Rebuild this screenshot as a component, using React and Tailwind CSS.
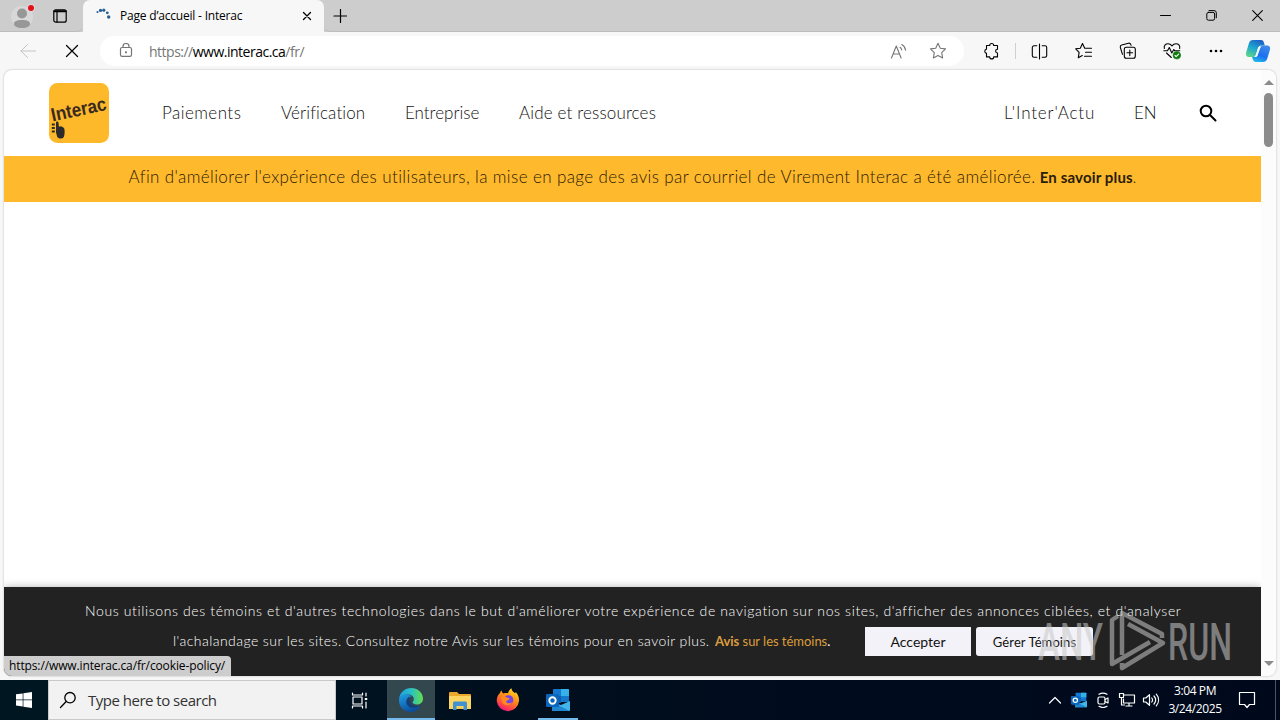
import React from 'react';

const Stroke = ({ size = 18, className = '', sw = 1, children }) => (
  <svg
    width={size}
    height={size}
    viewBox={`0 0 ${size} ${size}`}
    fill="none"
    stroke="currentColor"
    strokeWidth={sw}
    strokeLinecap="round"
    strokeLinejoin="round"
    className={`shrink-0 ${className}`}
  >
    {children}
  </svg>
);

const Slot = ({ className = 'w-11', children }) => (
  <div className={`flex h-full shrink-0 items-center justify-center ${className}`}>{children}</div>
);

const TitleBar = () => (
  <div className="flex h-8 bg-[#cdcdcd] text-black">
    <div className="flex w-[83px] rounded-br-[6px] border-b border-[#bdbdbd]">
      <Slot>
        <svg width="26" height="26" viewBox="0 0 26 26">
          <circle cx="13" cy="14" r="11" fill="#d8d8d8" />
          <circle cx="13" cy="10.5" r="5" fill="#979797" />
          <path d="M5 21c0-3 3-4 8-4s8 1 8 4c0 2-3 4-8 4s-8-2-8-4z" fill="#979797" />
          <circle cx="22" cy="5" r="4" fill="#d8d8d8" />
          <circle cx="22" cy="5" r="3" fill="#e3101c" />
        </svg>
      </Slot>
      <Slot className="w-8">
        <Stroke size={14} sw={1.2}>
          <rect x="0.8" y="0.8" width="12.4" height="12.4" rx="2" />
          <path d="M1.3 2.3h11.4" strokeWidth="2" />
          <path d="M4 3v10" />
        </Stroke>
      </Slot>
    </div>
    <div className="flex w-[241px] items-center rounded-t-[7px] bg-[#f7f7f7]">
      <svg width="16" height="16" viewBox="0 0 16 16" className="ml-3 shrink-0">
        <g fill="#245f96">
          <circle cx="2.5" cy="4" r="1.1" />
          <circle cx="5.5" cy="2.4" r="1.6" />
          <circle cx="8.8" cy="2.2" r="1.6" />
          <circle cx="12.3" cy="4.8" r="1.4" />
          <circle cx="13.7" cy="9" r="1.7" />
        </g>
      </svg>
      <span className="ml-[9px] w-[170px] whitespace-nowrap text-[12px] tracking-[-0.2px]">
        Page d’accueil - Interac
      </span>
      <Stroke size={10} sw={1.3} className="ml-[12px]">
        <path d="M1.5 1.5l7 7M8.5 1.5l-7 7" />
      </Stroke>
    </div>
    <div className="flex flex-1 items-center rounded-bl-[6px] border-b border-[#bdbdbd]">
      <Stroke size={14} sw={1.2} className="ml-[9px]">
        <path d="M7.5 .5v13M1 7h13" />
      </Stroke>
      <div className="ml-auto flex h-full">
        <Slot className="w-[46px]">
          <Stroke size={11}><path d="M.5 5.5h10" /></Stroke>
        </Slot>
        <Slot className="w-[46px]">
          <Stroke size={11}>
            <rect x=".8" y="2.4" width="7.8" height="7.8" rx="1.6" />
            <path d="M3 .6h5a2.2 2.2 0 0 1 2.3 2.2v5" />
          </Stroke>
        </Slot>
        <Slot className="w-[46px]">
          <Stroke size={11} sw={1.1}><path d="M.7.7l9.6 9.6M10.3.7L.7 10.3" /></Stroke>
        </Slot>
      </div>
    </div>
  </div>
);

const Copilot = () => (
  <svg width="26" height="24" viewBox="0 0 26 24">
    <defs>
      <linearGradient id="cpA" x1="0.7" y1="0" x2="0.2" y2="1">
        <stop offset="0" stopColor="#1d62c4" />
        <stop offset=".5" stopColor="#1da8d0" />
        <stop offset="1" stopColor="#5fd58a" />
      </linearGradient>
      <linearGradient id="cpB" x1="0.7" y1="0" x2="0.3" y2="1">
        <stop offset="0" stopColor="#3f8be8" />
        <stop offset=".6" stopColor="#1b6ff0" />
        <stop offset="1" stopColor="#22b8e8" />
      </linearGradient>
    </defs>
    <path d="M8 1h8c2 0 2.5 1 3 3l.8 2.5h-3c-2.5 0-3.3 1-4 3l-2 6.500c-.5 1.5-1.300 2-3 2H4C1 18 .6 15.5 1.3 13L4 4c.7-2 1.8-3 4-3z" fill="url(#cpA)" />
    <path d="M18 23h-7c-2 0-2.8-1-3.3-3l-.6-2h1.8c2.3 0 3.2-1 3.9-3l2-6.5c.5-1.5 1.4-2 3-2H22c3 0 3.6 2.2 2.9 4.5l-2.8 9c-.7 2-1.9 3-4.1 3z" fill="url(#cpB)" />
    <path d="M14.5 7.5h2.2c-1 .5-1.6 1.5-2 3L12.8 16c-.4 1-.9 1.7-1.8 2H9.3c1-.5 1.4-1.5 1.8-2.7l1.9-6c.3-.8.7-1.5 1.5-1.8z" fill="#f4fbff" />
  </svg>
);

const Toolbar = () => (
  <div className="flex h-[38px] items-center bg-[#f7f7f7] text-black">
    <Slot className="ml-1.5 w-11">
      <Stroke size={16} className="text-[#c4c4c4]"><path d="M15.5 8H1M7.5 1.5L1 8l6.500 6.5" /></Stroke>
    </Slot>
    <Slot>
      <Stroke size={14} sw={1.2}><path d="M1.5 1.5l11 11M12.5 1.5l-11 11" /></Stroke>
    </Slot>
    <div className="ml-1.5 flex h-[30px] w-[864px] items-center rounded-full bg-white text-[#767676]">
      <Stroke size={14} className="mb-0.5 ml-[19px]" sw={1.2}>
        <rect x="1.5" y="4.5" width="11" height="8.8" rx="1.6" />
        <path d="M4 4.5V3.5a3 3 0 0 1 6 0v1" />
        <circle cx="7" cy="9.3" r=".5" fill="currentColor" />
      </Stroke>
      <span className="ml-4 whitespace-nowrap text-[14px] tracking-[-0.5px]">
        https://<span className="text-black">www.interac.ca</span>/fr/
      </span>
      <Stroke size={17} sw={1.1} className="ml-auto">
        <path d="M1.500 15L6.300 3l4.800 12M3 11h6.500" />
        <path d="M10 4.300c1 .7 1.500 1.500 1.700 2.700M11.800 1.500c2.300 1.300 3.500 3.200 3.800 5.700" />
      </Stroke>
      <Stroke size={18} sw={1.1} className="mr-[17px] ml-[22px]">
        <path d="M9 1.3l2.3 4.9 5.2.7-3.800 3.700.9 5.300L9 13.400l-4.600 2.500.9-5.300-3.800-3.700 5.200-.7z" />
      </Stroke>
    </div>
    <Slot className="ml-[5px] w-11">
      <Stroke size={18} sw={1.1}>
        <path d="M4.500 3.500h3.200a2 2 0 0 1 4 0H15.500v3.700a1.900 1.900 0 0 0 0 3.800v3.900h-3.800a2 2 0 0 1-4 0H4.500v-3.500a2.200 2.200 0 0 1 0-4.300z" />
      </Stroke>
    </Slot>
    <div className="ml-[2px] h-4 w-px bg-[#cfcfcf]" />
    <Slot className="ml-px w-11">
      <Stroke size={17} sw={1.1}>
        <path d="M8.500 1v15M5.800 2.800H3a1.700 1.700 0 0 0-1.700 1.700v8A1.700 1.700 0 0 0 3 14.200h2.800M11.200 2.800H14a1.700 1.700 0 0 1 1.700 1.700v8a1.700 1.700 0 0 1-1.700 1.700h-2.800" />
      </Stroke>
    </Slot>
    <Slot className="ml-px w-11">
      <Stroke size={18} sw={1.1}>
        <path d="M7.500 1.500L5.300 6.200l-4.600.6 3.400 3.600-.8 5.400 4-2.300M7.500 1.500l2.200 4.700h6.800M10.500 10.300h6M9.500 14.200h7" />
      </Stroke>
    </Slot>
    <Slot>
      <Stroke size={18} sw={1.1}>
        <rect x="5.3" y="5.3" width="11" height="11" rx="2" />
        <path d="M10.800 8v5.600M8 10.800h5.600M3.500 12.300l-2.200-7A2 2 0 0 1 2.700 3l6.800-1.800a2 2 0 0 1 2.400 1.500l.2.600" />
      </Stroke>
    </Slot>
    <Slot>
      <Stroke size={18} sw={1.1}>
        <path d="M1.300 6.500C.7 3.500 2.800 1.700 5 1.700c1.700 0 3 .9 4 2.200 1-1.300 2.300-2.200 4-2.200 2.200 0 4.300 1.800 3.700 4.800M.8 8.800h3.700l1.800-3.300 2.500 5.500 2-3.500 1 1.300h5M3.500 11l4.800 4.500" />
        <circle cx="13.8" cy="13.3" r="3.8" fill="#107c10" stroke="#107c10" strokeWidth=".5" />
        <path d="M12 13.500l1.200 1.200 2.400-2.600" stroke="#fff" />
      </Stroke>
    </Slot>
    <Slot>
      <svg width="14" height="4" viewBox="0 0 14 4">
        <circle cx="2" cy="2" r="1.3" />
        <circle cx="7" cy="2" r="1.3" />
        <circle cx="12" cy="2" r="1.3" />
      </svg>
    </Slot>
    <Slot className="w-10"><Copilot /></Slot>
  </div>
);

const InteracLogo = () => (
  <svg width="60" height="60" viewBox="0 0 60 60" className="shrink-0">
    <rect width="60" height="60" rx="8.5" fill="#fdb92a" />
    <text
      x="0"
      y="0"
      transform="translate(3.5 38.5) rotate(-12)"
      textLength="56"
      lengthAdjust="spacingAndGlyphs"
      fontFamily="Liberation Sans"
      fontWeight="bold"
      fontSize="19"
      fill="#3a2a20"
    >
      Interac
    </text>
    <path d="M7 39.500c0-1.500 2.300-1.500 2.500 0l.4 4.200 1.800-.5 1.500.5 1.800 1.200c.9 1.500.9 6.500-.2 9-1.500 2.300-5.500 2-6.600-.2L7 49.500z" fill="#2d2a2b" />
    <path d="M2.800 41.500h3M2.800 45h3M2.800 48.500h3" stroke="#2d2a2b" strokeWidth="1.8" />
  </svg>
);

const SiteHeader = () => (
  <header className="flex h-[86px] items-center pl-[45px] text-[17px] font-light text-[#111]">
    <InteracLogo />
    <nav className="ml-[53px] flex gap-10 whitespace-nowrap">
      <a className="w-[79px] tracking-[0.45px]">Paiements</a>
      <a className="w-[84px] tracking-[0.13px]">Vérification</a>
      <a className="w-[74px]">Entreprise</a>
      <a className="w-[137px] tracking-[0.16px]">Aide et ressources</a>
    </nav>
    <div className="ml-auto flex items-center whitespace-nowrap">
      <a className="w-[90px] tracking-[0.85px]">L'Inter'Actu</a>
      <a className="ml-10 w-[22px]">EN</a>
      <Stroke size={18} sw={2} className="mr-[44px] ml-[43px] text-black">
        <circle cx="7" cy="7" r="5.3" />
        <path d="M11 11l5.500 5.500" />
      </Stroke>
    </div>
  </header>
);

const Banner = () => (
  <div className="flex h-[46px] justify-center whitespace-nowrap bg-[#ffb92c] pt-[8px] text-[17px] leading-[26px] font-light text-[#2c1a06]">
    <span className="tracking-[0.39px]">
      Afin d'améliorer l'expérience des utilisateurs, la mise en page des avis par courriel de Virement Interac a été améliorée.
    </span>
    <span className="ml-1 text-[15px] font-bold tracking-[0.15px] text-[#2a1c0a]">En savoir plus<span className="font-light">.</span></span>
  </div>
);

const CookieBar = () => (
  <div className="h-[89px] whitespace-nowrap bg-[#222] pt-[9px] text-[14px] leading-[30px] text-white shadow-[0_0_8px_rgba(0,0,0,0.3)]">
    <p className="ml-[81px] font-light tracking-[0.626px]">
      Nous utilisons des témoins et d'autres technologies dans le but d'améliorer votre expérience de navigation sur nos sites, d'afficher des annonces ciblées, et d'analyser
    </p>
    <div className="ml-[169px] flex items-center">
      <span className="w-[542px] font-light tracking-[0.44px]">
        l'achalandage sur les sites. Consultez notre Avis sur les témoins pour en savoir plus.
      </span>
      <span className="w-[150px] text-[13px] tracking-[-0.03px]">
        <span className="text-[#dc9d3c]"><b>Avis</b> sur les témoins</span>.
      </span>
      <button className="h-[29px] w-[106px] bg-[#f3f2f8] text-[14px] text-[#111]">Accepter</button>
      <button className="ml-[5px] h-[29px] w-[117px] rounded-[3px] bg-[#f3f2f8] text-[13px] tracking-[0.1px] text-[#111]">Gérer Témoins</button>
    </div>
  </div>
);

const Scrollbar = () => (
  <div className="flex w-[15px] flex-col items-center rounded-r-[8px] bg-[#fcfcfc]">
    <svg width="10" height="5" viewBox="0 0 10 5" className="mt-[10px]"><path d="M0 5l5-5L10 5z" fill="#8b8b8b" /></svg>
    <div className="mt-[8px] h-[54px] w-[9px] rounded-full bg-[#8b8b8b]" />
    <svg width="10" height="5" viewBox="0 0 10 5" className="mt-auto mb-[10px]"><path d="M0 0l5 5L10 0z" fill="#8b8b8b" /></svg>
  </div>
);

const Watermark = () => (
  <svg width="194" height="64" viewBox="0 0 194 64" className="absolute top-[609px] left-[1038px] opacity-55">
    <g fill="#c8c8c8" fontFamily="Roboto" fontSize="52" fontWeight="500">
      <text x="0" y="51" textLength="65" lengthAdjust="spacingAndGlyphs">ANY</text>
      <text x="130" y="51" textLength="64" lengthAdjust="spacingAndGlyphs">RUN</text>
    </g>
    <g fill="none" stroke="#c8c8c8" strokeWidth="4.5" strokeLinejoin="round">
      <path d="M80 7l-6 4v44l38-22" />
      <path d="M84 46V4l40 21v4" />
      <path d="M90 15l35 19-41 25v-5" />
    </g>
  </svg>
);

const EdgeIcon = () => (
  <svg width="26" height="26" viewBox="0 0 26 26">
    <defs>
      <linearGradient id="edTop" x1="0" y1="0.5" x2="1" y2="0.5">
        <stop offset="0" stopColor="#1d9fe0" />
        <stop offset=".5" stopColor="#29c0c8" />
        <stop offset="1" stopColor="#65dd4c" />
      </linearGradient>
      <linearGradient id="edLow" x1="0" y1="0" x2="0.5" y2="1">
        <stop offset="0" stopColor="#1fa1e6" />
        <stop offset="1" stopColor="#0b4c9c" />
      </linearGradient>
    </defs>
    <path d="M1 12C2 5 7 1 13 1c7 0 12 5 12 10.500 0 4-3 6-6 6s-4.500-1.300-4.500-2c0-.8 1.300-1.200 1.300-3.500 0-2.500-2.300-4.500-5.800-4.500C5.500 7.500 2 9.500 1 12z" fill="url(#edTop)" />
    <path d="M1 12.500c.5-3.500 4.500-5.500 8.500-5 2 .3 3.500 1 4.500 2-3-.3-5.500 2.200-5.500 5.500 0 5 6 8 14 3.500C20.500 22.500 17 25 13 25 6 25 .5 20 1 12.500z" fill="url(#edLow)" />
    <path d="M11 10c-2 1.200-2.500 3-2.500 5 0 5 6 8 14 3.500-2.500 1-8 1.500-10-2.500-1-2-.8-4.500-1.500-6z" fill="#123f7c" />
  </svg>
);

const FolderIcon = () => (
  <svg width="22" height="19" viewBox="0 0 22 19">
    <path d="M0 2a1 1 0 0 1 1-1h7l2 2h11a1 1 0 0 1 1 1v4H0z" fill="#e9a72c" />
    <path d="M0 5h22v13H0z" fill="#fcd462" />
    <path d="M4 19v-7a1.500 1.500 0 0 1 1.500-1.500h11A1.500 1.500 0 0 1 18 12v7h-3.500v-4h-7v4z" fill="#3f92cf" />
    <path d="M9 16h4v2H9z" fill="#f6c64a" />
  </svg>
);

const FirefoxIcon = () => (
  <svg width="24" height="24" viewBox="0 0 24 24">
    <defs>
      <linearGradient id="ffA" x1="0.8" y1="0" x2="0.3" y2="1">
        <stop offset="0" stopColor="#ffe226" />
        <stop offset=".45" stopColor="#ff8a16" />
        <stop offset=".8" stopColor="#ff3f4c" />
        <stop offset="1" stopColor="#e31587" />
      </linearGradient>
    </defs>
    <path d="M4 5c.3-1 .8-2 1.500-2.500.3 1.500 1 2.500 2 3 1.500-.5 3-.6 4.500-.3C12.500 3 14 1 15.500.3c0 2.500 2 3.500 3.500 5 .5-.2.700-.6.700-1.300 2.500 2.500 3.600 5.500 3.300 9A11.200 11.200 0 0 1 .7 13C.7 9.500 2 6.500 4 5z" fill="url(#ffA)" />
    <circle cx="12.5" cy="12" r="4.8" fill="#7542e5" />
    <path d="M5 9.500c2-1.800 4.500-1.500 6 .3 1.500 0 2.500.3 2.500 1.200-.5 1.500-3 1.200-3.500 2.500 1 2.500 4.500 2.200 6.500.5C15 18 8 18.500 6 14z" fill="#ff8a1f" />
  </svg>
);

const OutlookIcon = ({ size = 24 }) => (
  <svg width={size} height={size} viewBox="0 0 24 24">
    <path d="M8 1h14a1 1 0 0 1 1 1v12H7V2a1 1 0 0 1 1-1z" fill="#1578cf" />
    <path d="M15 1h7a1 1 0 0 1 1 1v6h-8z" fill="#35b1ea" />
    <path d="M7 8h8v7H7z" fill="#0f5fae" />
    <path d="M6 14l9 3 9-4v9a1 1 0 0 1-1 1H7a1 1 0 0 1-1-1z" fill="#43b5ea" />
    <path d="M6 14l17.500 9H7a1 1 0 0 1-1-1z" fill="#1f86d2" />
    <rect x="0" y="6" width="13" height="13" rx="1.2" fill="#0a66bd" />
    <circle cx="6.5" cy="12.5" r="3.2" fill="none" stroke="#fff" strokeWidth="1.9" />
  </svg>
);

const Taskbar = () => (
  <div className="flex h-10 bg-linear-to-r from-[#001722] via-[#000d1d] via-50% to-[#00091c] text-white">
    <Slot className="w-12">
      <svg width="16" height="16" viewBox="0 0 16 16" fill="#fff">
        <path d="M0 2.300l6.700-.9v6.200H0zM7.400 1.300L16 0v7.600H7.400zM0 8.300h6.700v6.200L0 13.600zM7.400 8.300H16V16l-8.600-1.300z" />
      </svg>
    </Slot>
    <div className="flex w-72 items-center border border-[#c9c9c9] bg-[#f2f2f2] text-[#333]">
      <Stroke size={18} sw={1.3} className="ml-[10px] text-black">
        <circle cx="11" cy="6.7" r="5.2" />
        <path d="M7.200 10.500L1.500 16.500" />
      </Stroke>
      <span className="ml-[11px] text-[15px] tracking-[-0.5px]">Type here to search</span>
    </div>
    <Slot className="w-[51px] pr-1">
      <Stroke size={17} sw={1.2}>
        <rect x="2" y="5" width="9" height="7" />
        <path d="M1.500 1v2h10V1M1.500 16v-2h10v2M15 1v3M15 10v6" />
        <path d="M15 6v2" strokeWidth="2.5" strokeLinecap="butt" />
      </Stroke>
    </Slot>
    <Slot className="w-12 border-b-2 border-[#76b9ed] bg-[#33474f] pt-0.5"><EdgeIcon /></Slot>
    <Slot className="w-[49px]"><FolderIcon /></Slot>
    <Slot className="w-12"><FirefoxIcon /></Slot>
    <div className="flex w-[52px] justify-center">
      <Slot className="w-10 border-b-2 border-[#76b9ed] pt-0.5"><OutlookIcon /></Slot>
    </div>
    <div className="ml-auto flex h-full items-center">
      <Slot className="w-6"><Stroke size={14} sw={1.2}><path d="M1.500 10L7 4.500l5.500 5.500" /></Stroke></Slot>
      <Slot className="w-6"><OutlookIcon size={16} /></Slot>
      <Slot className="w-6">
        <Stroke size={16} sw={1.2}>
          <rect x="3" y="5" width="7" height="7" rx="1.5" />
          <path d="M10 7.500L13 6v5l-3-1.500M4 2.300C6.500.7 9.500.7 12 2.300M4 14.300c2.500 1.500 5.500 1.500 8 0" />
        </Stroke>
      </Slot>
      <Slot className="w-6">
        <Stroke size={18} sw={1.2}>
          <path d="M6 4h10.500v8H5.500V8M11 12v3M8 15h6" />
          <rect x="1.5" y="2.5" width="4" height="4" />
          <path d="M3.500 6.500V14h3" />
        </Stroke>
      </Slot>
      <Slot className="w-6">
        <Stroke size={18} sw={1.2}>
          <path d="M1.500 7v4h2.300l3.700 3.300V3.700L3.800 7zM9.800 7c.9 1.200.9 2.800 0 4M12 5c2 2.400 2 5.600 0 8M14.300 3.200c3 3.500 3 8.100 0 11.600" />
        </Stroke>
      </Slot>
      <div className="w-[64px] text-center text-[12px] leading-[18px] tracking-[-0.4px] whitespace-nowrap">
        <p>3:04 PM</p>
        <p>3/24/2025</p>
      </div>
      <Slot className="w-10">
        <Stroke size={18} sw={1.2}><path d="M1.500 1.500h15v12h-5L9 16.500 6.500 13.500h-5z" /></Stroke>
      </Slot>
      <div className="mr-1 ml-2 h-full w-px bg-[#4b5560]" />
    </div>
  </div>
);

export default function App() {
  return (
    <div className="relative flex h-[720px] w-[1280px] flex-col overflow-hidden bg-[#f7f7f7] font-['Open_Sans',sans-serif]">
      <TitleBar />
      <Toolbar />
      <div className="mx-1 mb-1 flex h-[606px] overflow-hidden rounded-[8px] bg-white shadow-[0_0_2px_rgba(0,0,0,0.3)]">
        <main className="flex w-[1257px] flex-col font-['Lato',sans-serif]">
          <SiteHeader />
          <Banner />
          <div className="flex-1" />
          <CookieBar />
        </main>
        <Scrollbar />
      </div>
      <Taskbar />
      {/* link target shown by the browser on hover */}
      <div className="absolute top-[656px] left-1 h-5 w-[227px] rounded-tr-[4px] rounded-bl-[8px] bg-[#cdcdcd] pl-[5px] text-[12px] leading-5 tracking-[-0.12px] whitespace-nowrap text-black">
        https://www.interac.ca/fr/cookie-policy/
      </div>
      <Watermark />
    </div>
  );
}
